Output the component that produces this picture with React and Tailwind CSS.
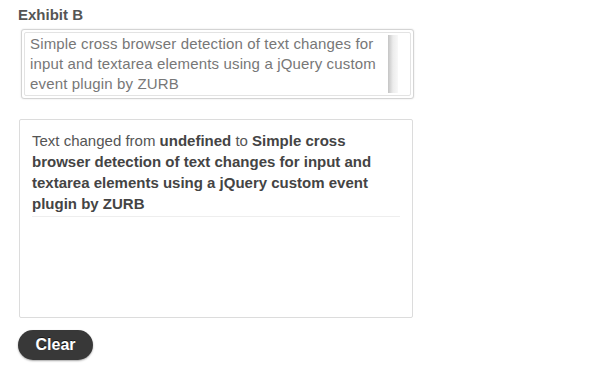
import React, { useState } from 'react';

const defaultText =
  'Simple cross browser detection of text changes for input and textarea elements using a jQuery custom event plugin by ZURB';

export default function App() {
  const [log, setLog] = useState([{ from: 'undefined', to: defaultText }]);

  return (
    <div className="min-h-[376px] w-[600px] bg-white pl-[18px] pt-[6px] font-['Liberation_Sans',Arial,sans-serif]">
      <div className="text-[15px] font-bold leading-[18px] text-[#555]">Exhibit B</div>

      {/* fake textarea with its scrollbar */}
      <div className="ml-[3px] mt-[5px] flex h-[70px] w-[393px] rounded-[3px] border border-[#d4d4d4] bg-white p-[2px] shadow-[0_0_2px_rgba(0,0,0,0.12)]">
        <div className="flex flex-1 overflow-hidden rounded-[2px] border border-[#e3e3e3]">
          <div className="flex-1 pl-[5px] pr-[2px] pt-[1px] text-[15px] leading-[20px] tracking-[0.15px] text-[#777]">
            {defaultText}
          </div>
          <div className="my-[2px] mr-[12px] w-[10px] bg-gradient-to-r from-[#c4c4c4] via-[#ececec] to-[#f8f8f8]" />
        </div>
      </div>

      <div className="ml-[1px] mt-[20px] h-[199px] w-[394px] rounded-[2px] border border-[#dcdcdc] bg-white px-[12px] pt-[10px]">
        {log.map((entry, i) => (
          <p
            key={i}
            className="border-b border-[#eeeeee] pb-[2px] text-[15px] leading-[21px] text-[#555]"
          >
            Text changed from <b className="text-[#444]">{entry.from}</b> to{' '}
            <b className="text-[#444]">{entry.to}</b>
          </p>
        ))}
      </div>

      <button
        type="button"
        onClick={() => setLog([])}
        className="mt-[12px] h-[30px] w-[75px] rounded-full bg-[#383838] pb-[1px] text-[16px] font-bold text-white shadow-[0_1px_2px_rgba(0,0,0,0.35)] [text-shadow:0_-1px_0_rgba(0,0,0,0.6)]"
      >
        Clear
      </button>
    </div>
  );
}
